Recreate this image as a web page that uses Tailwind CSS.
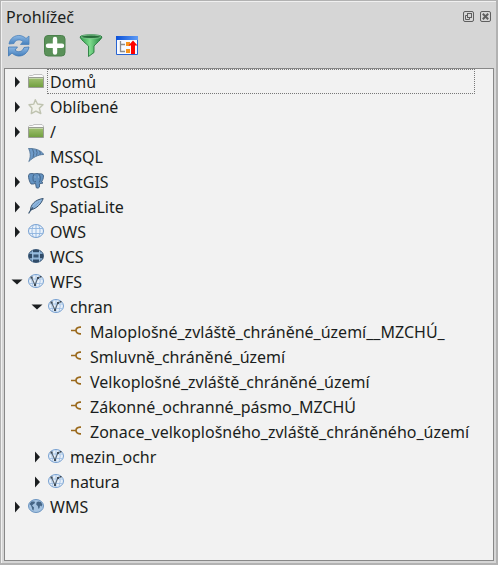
<!DOCTYPE html>
<html lang="cs">
<head>
<meta charset="utf-8">
<title>Prohlížeč</title>
<script src="https://cdn.jsdelivr.net/npm/@tailwindcss/browser@4"></script>
</head>
<body class="w-[498px] h-[565px] overflow-hidden bg-[#d6d6d6] font-['Noto_Sans',sans-serif] text-[16px] leading-[25px] text-[#1b1e20]">
<svg class="absolute w-0 h-0">
  <defs>
    <linearGradient id="fg" x1="0" y1="0" x2="0" y2="1"><stop offset="0" stop-color="#a3c373"/><stop offset="1" stop-color="#6f9e3e"/></linearGradient>
    <linearGradient id="gg" x1="0" y1="0" x2="1" y2="0"><stop offset="0" stop-color="#2f9c4c"/><stop offset=".45" stop-color="#7ddc8c"/><stop offset="1" stop-color="#1f7f3c"/></linearGradient>
    <linearGradient id="bg" x1="0" y1="0" x2="0" y2="1"><stop offset="0" stop-color="#8db8e4"/><stop offset="1" stop-color="#4580bd"/></linearGradient>
    <linearGradient id="tb" x1="0" y1="0" x2="1" y2="0"><stop offset="0" stop-color="#0a50d8"/><stop offset="1" stop-color="#5f9cf5"/></linearGradient>
    <symbol id="right" viewBox="0 0 12 12"><path d="M3 .5 8 6 3 11.500Z" fill="#1b1e20"/></symbol>
    <symbol id="down" viewBox="0 0 12 12"><path d="M.5 3.500h11L6 8.500Z" fill="#1b1e20"/></symbol>
    <symbol id="folder" viewBox="0 0 16 16">
      <path d="M.5 4.500V2.500L1.500 1.500H4.500L6 .5H14L15.500 2V4.500" fill="#fafafa" stroke="#b4b4b4" stroke-width=".8"/>
      <path d="M.5 3.500h15v10H.5Z" fill="url(#fg)" stroke="#999d93"/>
      <path d="M1 4.500h14" stroke="#c3d6a8"/>
    </symbol>
    <symbol id="star" viewBox="0 0 16 16"><path d="M7.300 .7 9.500 5 15 5.700 11.300 9.300 12.800 14.500 7.900 12.100 3.300 14.600 4 9.300 1 5.700 5.800 5.100Z" fill="#f1f2eb" stroke="#bfc3b0" stroke-width="1.400" stroke-linejoin="round"/></symbol>
    <symbol id="mssql" viewBox="0 0 16 16">
      <path d="M.5 .4C7 .4 13 2 15.800 6.500C10 6.500 5 9.500 .8 13.500C3 9 2.500 4 .5 .4Z" fill="#6f9bc9" stroke="#527597" stroke-width=".9"/>
      <path d="M4.500 1Q7 5 5 9.500M8 1.500Q10 4.500 8.500 7.500M11.500 3Q12.800 4.800 12 6.500" fill="none" stroke="#4d6e91" stroke-width="1"/>
    </symbol>
    <symbol id="pg" viewBox="0 0 16 16">
      <path d="M1.500.8C3 .4 5 .4 6 .9C8 .4 10 .4 11 .9C13 .4 15.500 1 15.500 3C15.500 5.500 14.500 7.500 13.500 9L15 10L11.500 10.800V14Q10.500 15.800 8.300 14.800L7.500 10.300L5.500 11H3C1.500 9 .2 4.500 .5 2.500Z" fill="#6392c1" stroke="#3f5f80" stroke-width=".9"/>
      <path d="M5.800 1.500C4.500 4 5 7 5.500 8.500M11 1.200C13 3.500 12.500 7 11.200 9.500M6 9 8 8.500" fill="none" stroke="#3d5f82" stroke-width=".9"/>
      <path d="M6.500 4h1M10 4h1" stroke="#a9c5e0"/>
    </symbol>
    <symbol id="feather" viewBox="0 0 16 16">
      <path d="M2.500 12C2.500 7 7 1.500 15.200.5C13.500 5.500 9 10.500 2.500 12Z" fill="#8eb6de" stroke="#38536f" stroke-width="1"/>
      <path d="M.6 15.500C2 13 3.500 11 5 9.500" fill="none" stroke="#36526e" stroke-width="1.100"/>
      <path d="M5 9.500 11 4" stroke="#6f98c4" stroke-width=".8"/>
    </symbol>
    <symbol id="globe" viewBox="0 0 16 16">
      <ellipse cx="8" cy="7" rx="7.500" ry="6.500" fill="#eaf2fb" stroke="#759fd0"/>
      <path d="M.8 4.500h14.400M.8 9.500h14.400M8 .5v13M5.500 1C3.500 5 3.500 9 5.500 13M10.500 1C12.500 5 12.500 9 10.500 13" fill="none" stroke="#8db3df" stroke-width=".9"/>
    </symbol>
    <symbol id="wcs" viewBox="0 0 16 16">
      <ellipse cx="8" cy="7" rx="7.500" ry="6.500" fill="#6690b8" stroke="#3d5a78"/>
      <path d="M1 5h3v4.500H1ZM12 5h3v4.500h-3ZM5 10.500h6v2.500H5ZM5 1h6v2H5Z" fill="#314c68"/>
      <path d="M5 4h6v5.500H5Z" fill="#8fb6da"/>
      <path d="M5.500 5.500h5v3h-5Z" fill="#385674"/>
      <path d="M2 4h12M2 9.800h12M4.500 1.500v11M11.500 1.500v11" stroke="#a5c5e3" stroke-width=".8"/>
    </symbol>
    <symbol id="wfs" viewBox="0 0 16 16">
      <ellipse cx="8" cy="7" rx="7.500" ry="6.500" fill="#e8f0f9" stroke="#759fd0"/>
      <path d="M1 5h14M1 9.500h14M8 1v12M11 1.500Q13.500 7 11 12.500M5 1.500Q2.500 7 5 12.500" fill="none" stroke="#9bbde3" stroke-width=".8"/>
      <path d="M3.500 3.500 7 11 10 3.500 12.500 3" fill="none" stroke="#5a6876" stroke-width="1.100"/>
      <path d="M2.500 2.500h2v2h-2ZM6 10h2v2H6ZM9 3h2v2H9ZM12 2h1.500v1.500H12Z" fill="#3f4a55"/>
    </symbol>
    <symbol id="wms" viewBox="0 0 16 16">
      <ellipse cx="8" cy="7" rx="7.500" ry="6.500" fill="#a5c3e1" stroke="#6b94c0"/>
      <path d="M1.500 5 3.500 2.500 6.500 2.500 7 4 5 5.500 4 6.500 6 8.500 5.500 11.500 4.500 11 3.800 8.500 3 6.500ZM8.500 3.500 10 2.500 13 3 14.300 5.500 13.500 7.500 12 6.500 11.500 9 10.500 10 9.800 7 8.300 5.800Z" fill="#456586"/>
    </symbol>
    <symbol id="line" viewBox="0 0 16 16"><path d="M3 6.500H8M13 3.200H12C9.500 3.500 8 5 8 6.500C8 8 9.500 9.500 12 9.800H13" fill="none" stroke="#9b6a1d" stroke-width="1.700"/></symbol>
  </defs>
</svg>

<main class="w-full h-full flex flex-col border-t border-l border-r-2 border-b-2 border-[#b2b2b2]">
 <div class="flex-1 min-h-0 flex flex-col border-l border-t border-[#f0f0f0] pl-[2px] pr-[2px] pb-[2px]">
  <header class="h-[28px] flex items-center justify-between pl-[2px] pr-[3px]">
    <h1 class="pt-[2px]">Prohlížeč</h1>
    <div class="flex gap-[6px]">
      <svg class="w-[11px] h-[11px]" viewBox="0 0 11 11" fill="none" stroke="#5f5f5f"><rect x=".5" y=".5" width="10" height="10" rx="1.500"/><rect x="4.500" y="2.500" width="4" height="4"/><path d="M4 4.500H2.500V8.500H6.500V7" /></svg>
      <svg class="w-[11px] h-[11px]" viewBox="0 0 11 11" fill="none" stroke="#5f5f5f"><rect x=".5" y=".5" width="10" height="10" rx="1.500"/><path d="M2.800 2.800 8.200 8.200M8.200 2.800 2.800 8.200" stroke-width="2"/></svg>
    </div>
  </header>
  <nav class="h-[38px] flex gap-[12px] pl-[3px] pt-[4px]">
    <svg class="w-6 h-6" viewBox="0 0 24 24">
      <path d="M2 10C3 4 8 1 13 1.500C16 2 18 3.500 19 4.500L22 2V10.500H13.500L16 7.500C13 4.800 8 5.500 7 9.500Z" fill="url(#bg)" stroke="#4d83bb" stroke-width=".8"/>
      <path d="M22 13C21 19 16 22.500 11 22C8 21.500 6 20 5 19L1.500 22V13H10.500L8 16C11 19 15.500 18 17 13.500Z" fill="url(#bg)" stroke="#4077b2" stroke-width=".8"/>
    </svg>
    <svg class="w-6 h-6" viewBox="0 0 24 24"><rect x="1.500" y="1.500" width="20.500" height="20.500" rx="3.500" fill="#5a9159" stroke="#4b804c"/><path d="M12 5v13.500M5 11.800h14" stroke="#fff" stroke-width="4.400" stroke-linecap="round"/></svg>
    <svg class="w-6 h-6" viewBox="0 0 24 24">
      <path d="M1 3C1 0 23 0 23 3C22 6 17 9.500 15 12V18.500L9.500 22.500V12C7 9.500 2 6 1 3Z" fill="url(#gg)" stroke="#277b3d" stroke-width=".9"/>
      <ellipse cx="12" cy="2.800" rx="10" ry="1.700" fill="#276c3a" stroke="#8fd29c" stroke-width=".7"/>
    </svg>
    <svg class="w-6 h-6" viewBox="0 0 24 24">
      <path d="M1.500 3h21v17.500h-21Z" fill="#f7faff" stroke="#2864d2"/><path d="M1 2h22v4H1Z" fill="url(#tb)"/>
      <path d="M5.500 7v10.500H10M5.500 10.500H10" fill="none" stroke="#8d8d8d" stroke-width="1.300"/>
      <path d="M11 8h4v4h-4ZM11 15h4v4h-4Z" fill="#f7941d"/>
      <path d="M18 6.500 22.500 11.500H20V20H16V11.500H13.500Z" fill="#f00"/>
    </svg>
  </nav>
  <section class="flex-1 min-h-0 border border-[#888] bg-[#f2f2f2]">
    <ul>
      <li class="h-[25px] flex items-center pl-[6px]"><svg class="w-3 h-3 mr-[5px] ml-[1px] mt-[1px]"><use href="#right"/></svg><svg class="w-4 h-4 mt-[1px] mr-[3px] ml-[-1px]"><use href="#folder"/></svg><span class="w-[428px] h-[25px] pl-[3px] pt-[1px] outline-1 outline-dotted outline-[#777] outline-offset-[-1px]">Domů</span></li>
      <li class="h-[25px] flex items-center pl-[7px]"><svg class="w-3 h-3 mr-[4px] mt-[1px]"><use href="#right"/></svg><svg class="w-4 h-4 mt-[1px] mr-[6px]"><use href="#star"/></svg><span class="pt-[2px]">Oblíbené</span></li>
      <li class="h-[25px] flex items-center pl-[7px]"><svg class="w-3 h-3 mr-[4px] mt-[1px]"><use href="#right"/></svg><svg class="w-4 h-4 mt-[1px] mr-[6px]"><use href="#folder"/></svg><span class="pt-[2px]">/</span></li>
      <li class="h-[25px] flex items-center pl-[23px]"><svg class="w-4 h-4 mb-[1px] mr-[6px]"><use href="#mssql"/></svg><span class="pt-[2px]">MSSQL</span></li>
      <li class="h-[25px] flex items-center pl-[7px]"><svg class="w-3 h-3 mr-[4px] mt-[1px]"><use href="#right"/></svg><svg class="w-4 h-4 mb-[1px] mr-[6px]"><use href="#pg"/></svg><span class="pt-[2px]">PostGIS</span></li>
      <li class="h-[25px] flex items-center pl-[7px]"><svg class="w-3 h-3 mr-[4px] mt-[1px]"><use href="#right"/></svg><svg class="w-4 h-4 mb-[1px] mr-[6px]"><use href="#feather"/></svg><span class="pt-[2px]">SpatiaLite</span></li>
      <li class="h-[25px] flex items-center pl-[7px]"><svg class="w-3 h-3 mr-[4px] mt-[1px]"><use href="#right"/></svg><svg class="w-4 h-4 mt-[1px] mr-[6px]"><use href="#globe"/></svg><span class="pt-[2px]">OWS</span></li>
      <li class="h-[25px] flex items-center pl-[23px]"><svg class="w-4 h-4 mt-[1px] mr-[6px]"><use href="#wcs"/></svg><span class="pt-[2px]">WCS</span></li>
      <li class="h-[25px] flex items-center pl-[6px]"><svg class="w-3 h-3 mr-[5px] mt-[1px]"><use href="#down"/></svg><svg class="w-4 h-4 mt-[1px] mr-[6px]"><use href="#wfs"/></svg><span class="pt-[2px]">WFS</span></li>
      <li class="h-[25px] flex items-center pl-[26px]"><svg class="w-3 h-3 mr-[5px] mt-[1px]"><use href="#down"/></svg><svg class="w-4 h-4 mt-[1px] mr-[6px]"><use href="#wfs"/></svg><span class="pt-[2px]">chran</span></li>
      <li class="h-[25px] flex items-center pl-[63px]"><svg class="w-4 h-4 mt-[1px] mr-[6px]"><use href="#line"/></svg><span class="pt-[2px]">Maloplošné_zvláště_chráněné_území__MZCHÚ_</span></li>
      <li class="h-[25px] flex items-center pl-[63px]"><svg class="w-4 h-4 mt-[1px] mr-[6px]"><use href="#line"/></svg><span class="pt-[2px]">Smluvně_chráněné_území</span></li>
      <li class="h-[25px] flex items-center pl-[63px]"><svg class="w-4 h-4 mt-[1px] mr-[6px]"><use href="#line"/></svg><span class="pt-[2px]">Velkoplošné_zvláště_chráněné_území</span></li>
      <li class="h-[25px] flex items-center pl-[63px]"><svg class="w-4 h-4 mt-[1px] mr-[6px]"><use href="#line"/></svg><span class="pt-[2px]">Zákonné_ochranné_pásmo_MZCHÚ</span></li>
      <li class="h-[25px] flex items-center pl-[63px]"><svg class="w-4 h-4 mt-[1px] mr-[6px]"><use href="#line"/></svg><span class="pt-[2px]">Zonace_velkoplošného_zvláště_chráněného_území</span></li>
      <li class="h-[25px] flex items-center pl-[27px]"><svg class="w-3 h-3 mr-[4px] mt-[1px]"><use href="#right"/></svg><svg class="w-4 h-4 mt-[1px] mr-[6px]"><use href="#wfs"/></svg><span class="pt-[2px]">mezin_ochr</span></li>
      <li class="h-[25px] flex items-center pl-[27px]"><svg class="w-3 h-3 mr-[4px] mt-[1px]"><use href="#right"/></svg><svg class="w-4 h-4 mt-[1px] mr-[6px]"><use href="#wfs"/></svg><span class="pt-[2px]">natura</span></li>
      <li class="h-[25px] flex items-center pl-[7px]"><svg class="w-3 h-3 mr-[4px] mt-[1px]"><use href="#right"/></svg><svg class="w-4 h-4 mt-[1px] mr-[6px]"><use href="#wms"/></svg><span class="pt-[2px]">WMS</span></li>
    </ul>
  </section>
 </div>
</main>
</body>
</html>
